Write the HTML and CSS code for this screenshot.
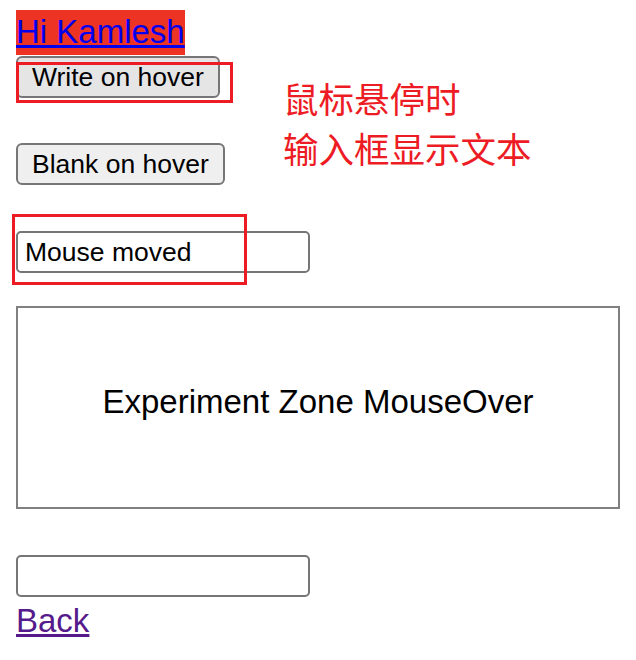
FILE: index.html
```html
<!DOCTYPE html>
<html lang="en">
<head>
<meta charset="utf-8">
<title>MouseOver</title>
<link rel="stylesheet" href="styles.css">
</head>
<body>
<div class="page">
  <div class="hello"><a href="#" class="hello-link">Hi Kamlesh</a></div>
  <button class="btn btn-hover">Write on hover</button>
  <button class="btn btn-blank">Blank on hover</button>
  <input class="field field-first" type="text" value="Mouse moved">
  <div class="zone">Experiment Zone MouseOver</div>
  <input class="field field-second" type="text" value="">
  <a href="#" class="back">Back</a>
</div>
<div class="mark mark-button"></div>
<div class="mark mark-input"></div>
<div class="note">鼠标悬停时<br>输入框显示文本</div>
</body>
</html>
```
FILE: styles.css
```css
html, body {
  margin: 0;
  background: #ffffff;
}
body {
  position: relative;
  width: 636px;
  height: 660px;
  overflow: hidden;
  font-family: "Liberation Sans", Arial, sans-serif;
}
.page {
  display: flex;
  flex-direction: column;
  align-items: flex-start;
  padding: 10px 16px 0;
}
.hello {
  background: #ec3324;
  height: 45px;
  line-height: 43px;
}
.hello-link {
  font-size: 33px;
  color: #0000ee;
  text-decoration: underline;
  text-decoration-thickness: 3px;
  text-underline-offset: 2px;
}
.btn {
  box-sizing: border-box;
  height: 42px;
  margin: 0;
  padding: 0 14px;
  font-family: "Liberation Sans", Arial, sans-serif;
  font-size: 26.5px;
  color: #000;
  background: #efefef;
  border: 2px solid #767676;
  border-radius: 6px;
}
.btn-hover {
  margin-top: 1px;
  background: #e5e5e5;
}
.btn-blank {
  margin-top: 45px;
}
.field {
  box-sizing: border-box;
  width: 294px;
  height: 42px;
  margin: 0;
  padding: 0 7px;
  font-family: "Liberation Sans", Arial, sans-serif;
  font-size: 26.5px;
  color: #000;
  background: #fff;
  border: 2px solid #767676;
  border-radius: 5px;
}
.field-first {
  margin-top: 46px;
}
.zone {
  box-sizing: border-box;
  width: 604px;
  height: 203px;
  margin-top: 33px;
  border: 2px solid #808080;
  display: flex;
  align-items: center;
  justify-content: center;
  padding-bottom: 12px;
  font-size: 33px;
  color: #000;
}
.field-second {
  margin-top: 46px;
}
.back {
  margin-top: 5px;
  font-size: 33px;
  color: #551a8b;
  text-decoration: underline;
  text-decoration-thickness: 3px;
  text-underline-offset: 2px;
}
.mark {
  position: absolute;
  box-sizing: border-box;
  border: 3px solid #ed1c24;
}
.mark-button {
  left: 16px;
  top: 62px;
  width: 217px;
  height: 41px;
}
.mark-input {
  left: 12px;
  top: 214px;
  width: 235px;
  height: 71px;
}
.note {
  position: absolute;
  left: 283px;
  top: 73px;
  font-family: "Noto Sans CJK SC", sans-serif;
  font-size: 35.5px;
  line-height: 50px;
  color: #ed1c24;
}
```
